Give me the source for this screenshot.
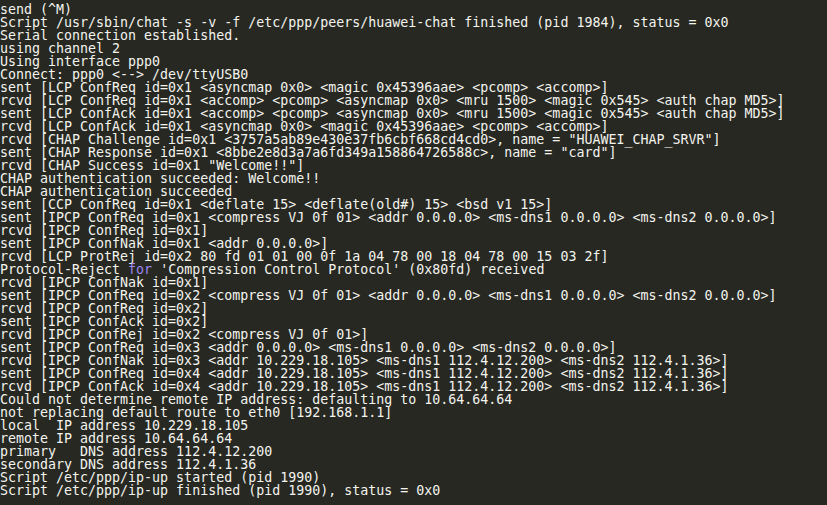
const LINES: string[] = [
  'send (^M)',
  'Script /usr/sbin/chat -s -v -f /etc/ppp/peers/huawei-chat finished (pid 1984), status = 0x0',
  'Serial connection established.',
  'using channel 2',
  'Using interface ppp0',
  'Connect: ppp0 <--> /dev/ttyUSB0',
  'sent [LCP ConfReq id=0x1 <asyncmap 0x0> <magic 0x45396aae> <pcomp> <accomp>]',
  'rcvd [LCP ConfReq id=0x1 <accomp> <pcomp> <asyncmap 0x0> <mru 1500> <magic 0x545> <auth chap MD5>]',
  'sent [LCP ConfAck id=0x1 <accomp> <pcomp> <asyncmap 0x0> <mru 1500> <magic 0x545> <auth chap MD5>]',
  'rcvd [LCP ConfAck id=0x1 <asyncmap 0x0> <magic 0x45396aae> <pcomp> <accomp>]',
  'rcvd [CHAP Challenge id=0x1 <3757a5ab89e430e37fb6cbf668cd4cd0>, name = "HUAWEI_CHAP_SRVR"]',
  'sent [CHAP Response id=0x1 <8bbe2e8d3a7a6fd349a158864726588c>, name = "card"]',
  'rcvd [CHAP Success id=0x1 "Welcome!!"]',
  'CHAP authentication succeeded: Welcome!!',
  'CHAP authentication succeeded',
  'sent [CCP ConfReq id=0x1 <deflate 15> <deflate(old#) 15> <bsd v1 15>]',
  'sent [IPCP ConfReq id=0x1 <compress VJ 0f 01> <addr 0.0.0.0> <ms-dns1 0.0.0.0> <ms-dns2 0.0.0.0>]',
  'rcvd [IPCP ConfReq id=0x1]',
  'sent [IPCP ConfNak id=0x1 <addr 0.0.0.0>]',
  'rcvd [LCP ProtRej id=0x2 80 fd 01 01 00 0f 1a 04 78 00 18 04 78 00 15 03 2f]',
  '@@PROTO',
  'rcvd [IPCP ConfNak id=0x1]',
  'sent [IPCP ConfReq id=0x2 <compress VJ 0f 01> <addr 0.0.0.0> <ms-dns1 0.0.0.0> <ms-dns2 0.0.0.0>]',
  'rcvd [IPCP ConfReq id=0x2]',
  'sent [IPCP ConfAck id=0x2]',
  'rcvd [IPCP ConfRej id=0x2 <compress VJ 0f 01>]',
  'sent [IPCP ConfReq id=0x3 <addr 0.0.0.0> <ms-dns1 0.0.0.0> <ms-dns2 0.0.0.0>]',
  'rcvd [IPCP ConfNak id=0x3 <addr 10.229.18.105> <ms-dns1 112.4.12.200> <ms-dns2 112.4.1.36>]',
  'sent [IPCP ConfReq id=0x4 <addr 10.229.18.105> <ms-dns1 112.4.12.200> <ms-dns2 112.4.1.36>]',
  'rcvd [IPCP ConfAck id=0x4 <addr 10.229.18.105> <ms-dns1 112.4.12.200> <ms-dns2 112.4.1.36>]',
  'Could not determine remote IP address: defaulting to 10.64.64.64',
  'not replacing default route to eth0 [192.168.1.1]',
  'local  IP address 10.229.18.105',
  'remote IP address 10.64.64.64',
  'primary   DNS address 112.4.12.200',
  'secondary DNS address 112.4.1.36',
  'Script /etc/ppp/ip-up started (pid 1990)',
  'Script /etc/ppp/ip-up finished (pid 1990), status = 0x0',
];

function Line({ text }: { text: string }) {
  if (text === '@@PROTO') {
    return (
      <div className="h-[13px]">
        Protocol-Reject <span className="text-[#9f86f5]">for</span> 'Compression Control Protocol' (0x80fd) received
      </div>
    );
  }
  return <div className="h-[13px]">{text}</div>;
}

export default function App() {
  return (
    <div className="w-[827px] h-[505px] overflow-hidden bg-[#272822] pt-[3px] text-[#f4f4ee] font-['DejaVu_Sans_Mono',monospace] text-[13.3px] leading-[13px] whitespace-pre">
      {LINES.map((line, i) => (
        <Line key={i} text={line} />
      ))}
    </div>
  );
}
